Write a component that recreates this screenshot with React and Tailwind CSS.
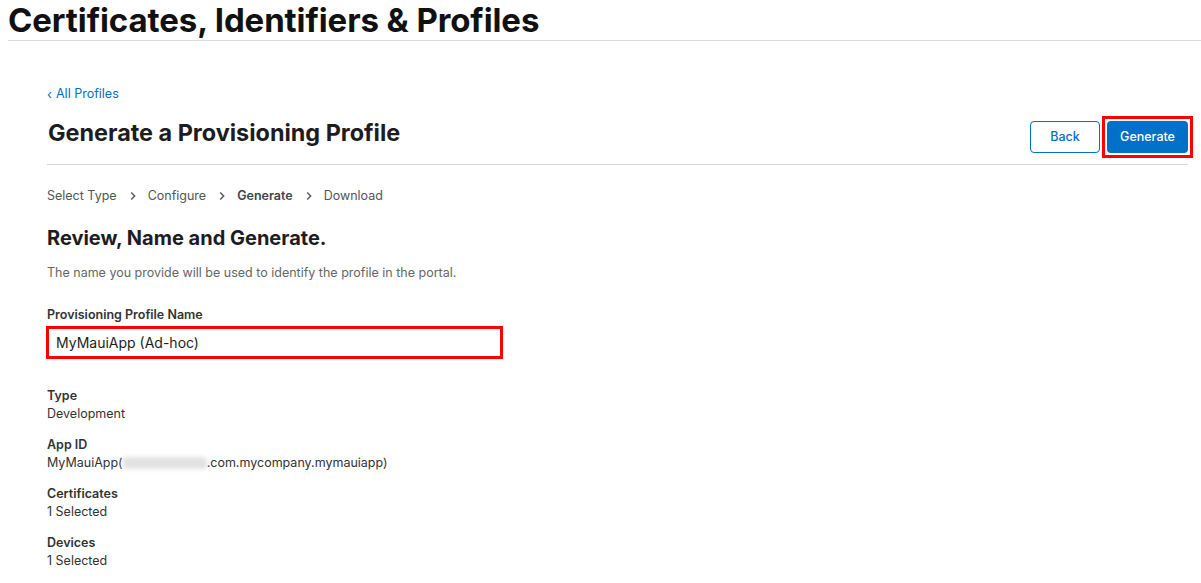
import React from "react";

const font = { fontFamily: "Inter, 'Noto Sans', sans-serif" };

function Chevron() {
  return (
    <svg width="6" height="10" viewBox="0 0 6 10" className="ml-[13px] mr-[12px]">
      <path d="M1.2 1.5 L4.7 5 L1.2 8.5" fill="none" stroke="#555" strokeWidth="1.4" />
    </svg>
  );
}

function Field({ label, children }) {
  return (
    <div className="mb-[13px]">
      <div className="text-[12.5px] font-semibold text-[#333] leading-[18px]">{label}</div>
      <div className="text-[12.5px] text-[#333] leading-[18px]">{children}</div>
    </div>
  );
}

export default function App() {
  return (
    <div className="bg-white w-[1201px] h-[583px] overflow-hidden text-[#1d1d1f]" style={font}>
      <div className="pl-[8px]">
        <h1 className="text-[33px] font-bold leading-[40px] tracking-[-0.1px] text-[#111]">
          Certificates, Identifiers &amp; Profiles
        </h1>
        <div className="h-px bg-[#dcdcdc]" />
      </div>
      <div className="ml-[47px] mr-[13px]">
        <div className="mt-[45px] flex items-center text-[12.5px] text-[#0070c9] leading-[16px]">
          <span className="mr-[4px] text-[13px]">‹</span>All Profiles
        </div>
        <div className="flex items-end justify-between mt-[14px] pb-[6px] border-b border-[#d6d6d6]">
          <div className="text-[23.4px] font-bold text-[#1d1d1f] leading-[28px] pl-px mb-[11px]">
            Generate a Provisioning Profile
          </div>
          <div className="flex items-center">
            <button className="w-[70px] h-[32px] border border-[#0070c9] rounded-[4px] text-[12.5px] font-medium text-[#0070c9] bg-white mr-[2px]">
              Back
            </button>
            <div className="border-[3px] border-[#ff0000] p-[2px] -mr-[5px]">
              <button className="w-[81px] h-[32px] rounded-[4px] bg-[#0070c9] text-white text-[12.5px] font-medium block">
                Generate
              </button>
            </div>
          </div>
        </div>
        <div className="flex items-center mt-[23px] text-[12.5px] text-[#555] leading-[16px]">
          <span>Select Type</span>
          <Chevron />
          <span>Configure</span>
          <Chevron />
          <span className="font-semibold text-[#444]">Generate</span>
          <Chevron />
          <span>Download</span>
        </div>
        <div className="mt-[21px] text-[20px] font-bold leading-[26px] text-[#1d1d1f]">
          Review, Name and Generate.
        </div>
        <div className="mt-[14px] text-[12.5px] text-[#666] leading-[16px]">
          The name you provide will be used to identify the profile in the portal.
        </div>
        <div className="mt-[26px] text-[12.5px] font-semibold text-[#333] leading-[16px]">
          Provisioning Profile Name
        </div>
        <div className="mt-[3px] -ml-[1px] w-[457px] h-[33px] border-[3px] border-[#ff0000] flex items-center pl-[7px] text-[14px] text-[#1d1d1f]">
          MyMauiApp (Ad-hoc)
        </div>
        <div className="mt-[28px]">
          <Field label="Type">Development</Field>
          <Field label="App ID">
            <span className="inline-flex items-center">
              MyMauiApp(
              <span className="inline-block w-[84px] h-[12px] bg-[#e2e2e2] blur-[2px] rounded-sm" />
              .com.mycompany.mymauiapp)
            </span>
          </Field>
          <Field label="Certificates">1 Selected</Field>
          <Field label="Devices">1 Selected</Field>
        </div>
      </div>
    </div>
  );
}
